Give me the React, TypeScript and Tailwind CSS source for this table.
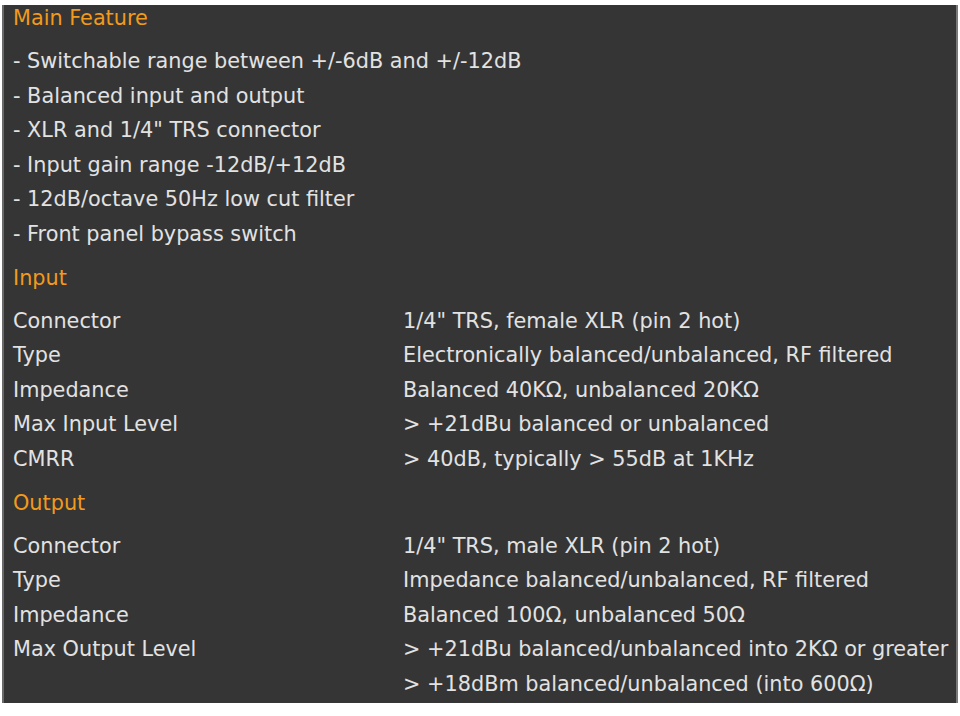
import React from "react";

const features = [
  "- Switchable range between +/-6dB and +/-12dB",
  "- Balanced input and output",
  '- XLR and 1/4" TRS connector',
  "- Input gain range -12dB/+12dB",
  "- 12dB/octave 50Hz low cut filter",
  "- Front panel bypass switch",
];

const input: [string, string[]][] = [
  ["Connector", ['1/4" TRS, female XLR (pin 2 hot)']],
  ["Type", ["Electronically balanced/unbalanced, RF filtered"]],
  ["Impedance", ["Balanced 40KΩ, unbalanced 20KΩ"]],
  ["Max Input Level", ["> +21dBu balanced or unbalanced"]],
  ["CMRR", ["> 40dB, typically > 55dB at 1KHz"]],
];

const output: [string, string[]][] = [
  ["Connector", ['1/4" TRS, male XLR (pin 2 hot)']],
  ["Type", ["Impedance balanced/unbalanced, RF filtered"]],
  ["Impedance", ["Balanced 100Ω, unbalanced 50Ω"]],
  [
    "Max Output Level",
    [
      "> +21dBu balanced/unbalanced into 2KΩ or greater",
      "> +18dBm balanced/unbalanced (into 600Ω)",
    ],
  ],
];

function Heading({ children, first }: { children: React.ReactNode; first?: boolean }) {
  return (
    <div
      className={`h-[26px] leading-[26px] text-[#f29a1c] mb-[13px] ${first ? "" : "mt-[13px]"}`}
    >
      {children}
    </div>
  );
}

function SpecRows({ rows }: { rows: [string, string[]][] }) {
  return (
    <div className="flex flex-col">
      {rows.map(([label, vals]) => (
        <div key={label} className="flex">
          <div className="w-[390px] shrink-0 leading-[34.6px]">{label}</div>
          <div className="flex flex-col">
            {vals.map((v) => (
              <div key={v} className="leading-[34.6px] whitespace-nowrap">
                {v}
              </div>
            ))}
          </div>
        </div>
      ))}
    </div>
  );
}

export default function App() {
  return (
    <div className="w-[960px] h-[716px] bg-white pt-[5px] overflow-hidden">
      <div
        className="ml-[2px] w-[956px] h-[698px] bg-[#353535] border-l-2 border-r-2 border-l-[#6a6a6a] border-r-[#7a7a7a] pl-[9px] text-[#e2e2e2] text-[20.8px] overflow-hidden"
        style={{ fontFamily: '"DejaVu Sans", Verdana, sans-serif' }}
      >
        <Heading first>Main Feature</Heading>
        <div className="flex flex-col">
          {features.map((f) => (
            <div key={f} className="leading-[34.6px] whitespace-nowrap">
              {f}
            </div>
          ))}
        </div>
        <Heading>Input</Heading>
        <SpecRows rows={input} />
        <Heading>Output</Heading>
        <SpecRows rows={output} />
      </div>
    </div>
  );
}
